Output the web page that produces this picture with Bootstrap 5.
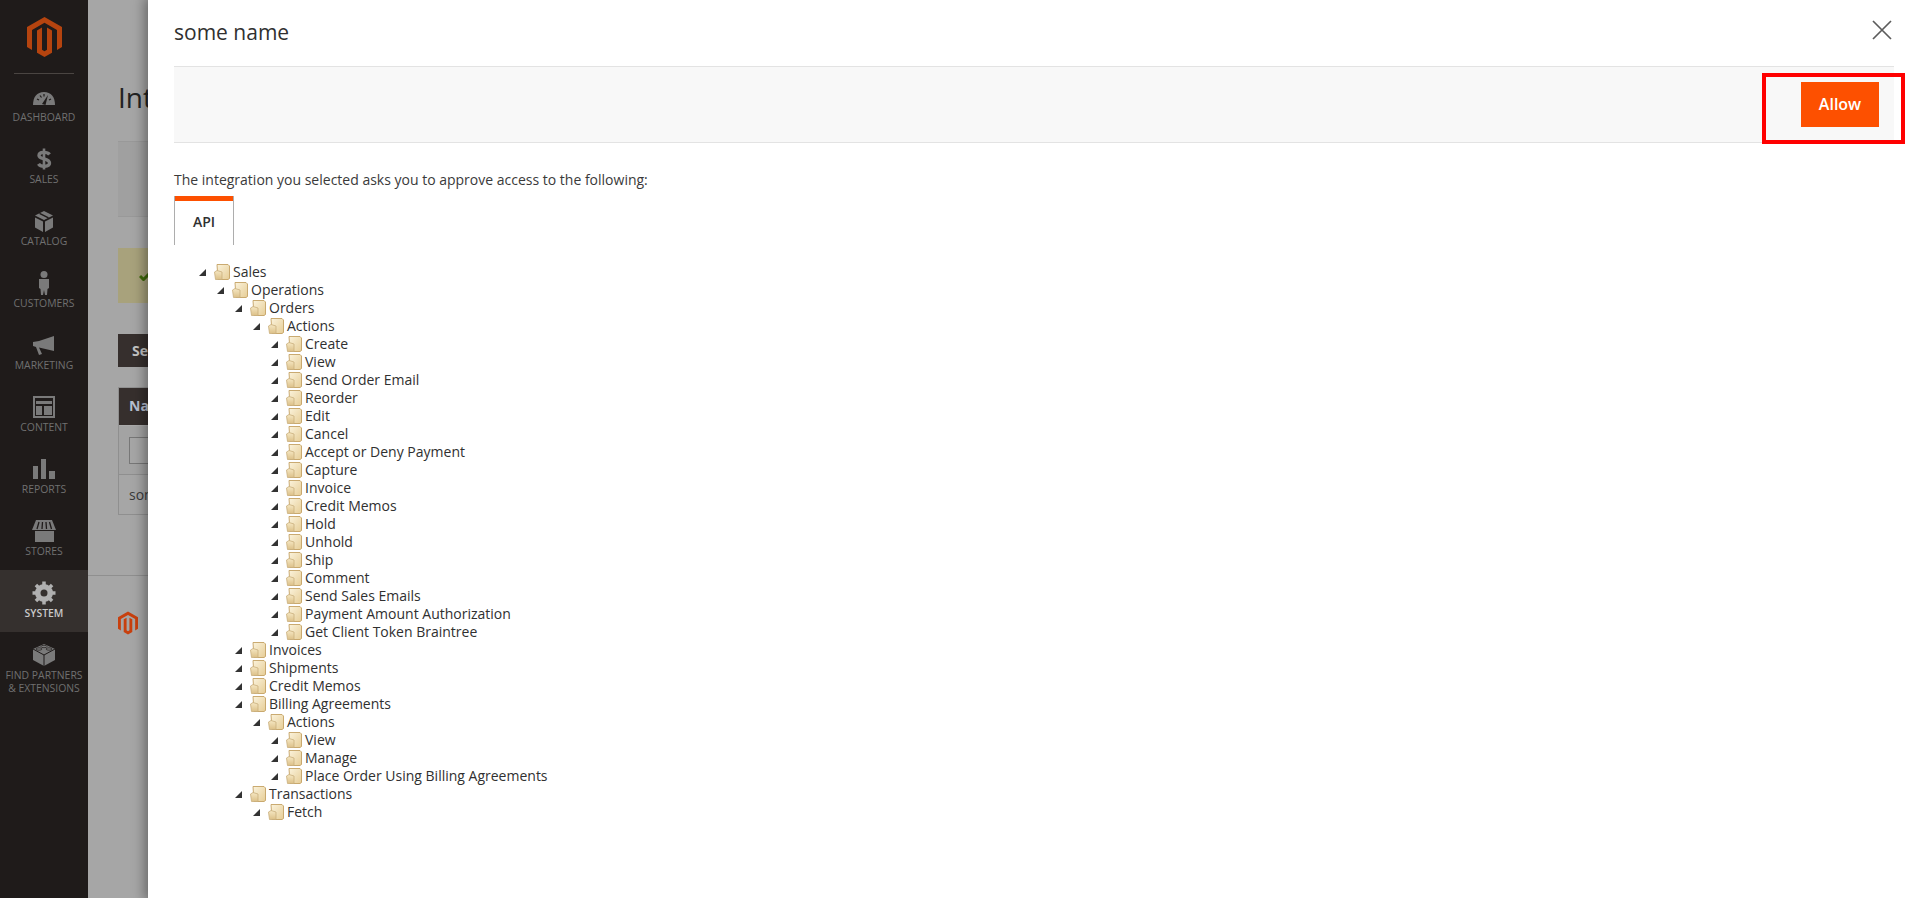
<!DOCTYPE html>
<html lang="en"><head><meta charset="utf-8"><title>Integrations</title>
<link href="https://cdn.jsdelivr.net/npm/bootstrap@5.3.0/dist/css/bootstrap.min.css" rel="stylesheet">
<style>
html,body{height:100%;overflow:hidden}
body{font-family:"Open Sans",sans-serif;font-size:14px;color:#303030;background:#a6a6a6}
.shell{height:898px;position:relative}
.sidenav{width:88px;background:#1f1b1a;flex:none}
.logobox{height:74px}
.logobox svg{width:35px;height:40px}
.rule{height:1px;background:#4a4542;margin:0 14px;margin-top:-1px}
.sitem{height:62px;color:#707070;font-size:10.4px;line-height:13px;padding-top:11px;text-align:center;white-space:nowrap}
.sitem svg{display:block;height:24px;margin:0 auto 2px;width:26px}
.sitem.on{background:#35302e;color:#c8c8c8;font-weight:600}
.backdrop{background:#a6a6a6}
.bgin{padding:0 0 0 30px;width:900px}
.bgtitle{font-size:28px;line-height:38px;padding-top:78px;color:#222;height:141px}
.bgbar{height:76px;background:#a0a0a0;border-top:1px solid #999;border-bottom:1px solid #999;margin-bottom:31px}
.bgmsg{height:55px;background:#a8a27c;margin-bottom:31px;padding:23px 0 0 21px}
.bgbtn{width:150px;height:33px;background:#362f2d;color:#c4c4c4;font-weight:700;font-size:14px;line-height:33px;padding-left:14px;margin-bottom:20px}
.bgtab{width:600px;border:1px solid #8f8f8f;height:128px;margin-bottom:60px}
.bghead{height:38px;background:#362f2d;color:#b8bfd0;font-weight:700;line-height:36px;padding-left:10px;border-bottom:1px solid #aaa}
.bgfilter{height:49px;padding:11px 10px;border-bottom:1px solid #8f8f8f;background:#a3a3a3}
.bginput{width:200px;height:27px;border:1px solid #777;background:#a6a6a6}
.bgrow{padding:10px;line-height:19px;color:#3a3a3a}
.bgfoot{border-top:1px solid #8f8f8f;padding:35px 0 0 30px}
.bgfoot svg{display:block;width:20px;height:24px}
.slidepanel{position:absolute;top:0;bottom:0;left:148px;right:0;background:#fff;box-shadow:0 0 12px 3px rgba(0,0,0,.4);padding:0 21px 0 26px}
.ptitle{font-size:21px;line-height:27px;padding-top:19px;height:66px;color:#303030}
.closex{position:absolute;top:20px;right:23px;width:20px;height:20px;background:none;border:0;padding:0}
.closex svg{display:block;width:20px;height:20px}
.actbar{height:77px;background:#f8f8f8;border-top:1px solid #e3e3e3;border-bottom:1px solid #e3e3e3;padding:15px 15px 0 0}
.allowbtn{width:78px;height:45px;background:#fd5000;border:0;border-radius:0;color:#fff;font-weight:600;font-size:16px;padding:0;line-height:43px}
.allowbtn:hover{background:#fd5000;color:#fff}
.redbox{position:absolute;left:1614px;top:73px;width:143px;height:71px;border:4px solid #f00;pointer-events:none}
.intro{margin:0;padding-top:27px;line-height:20px;height:53px;color:#3a3a3a}
.apitab{width:60px;height:49px;border:1px solid #adadad;border-bottom:0;border-top:0;position:relative;background:#fff;font-weight:600;font-size:14px;line-height:45px;text-align:center;box-shadow:inset 0 5px 0 #fd5000;padding-top:3px;color:#303030}
.ptree{list-style:none;margin:0;padding:18px 0 0 25px;color:#303030;font-size:14px;line-height:18px}
.ptree ul{list-style:none;margin:0;padding:0 0 0 18px}
.trow{height:18px;display:flex;align-items:center;white-space:nowrap}
.tarr{width:7px;height:7px;margin-right:8px;flex:none}
.tfold{width:16px;height:16px;margin-right:3px;flex:none}
</style></head><body>
<svg width="0" height="0" class="d-block position-absolute"><defs>
<symbol id="arr" viewBox="0 0 7 7"><path d="M7 0V7H0Z" fill="#333"/></symbol>
<linearGradient id="fg" x1="0" y1="0" x2="1" y2="1"><stop offset="0" stop-color="#fbf3dc"/><stop offset="1" stop-color="#e6cd96"/></linearGradient>
<linearGradient id="fh" x1="0" y1="0" x2="0" y2="1"><stop offset="0" stop-color="#f6e8c4"/><stop offset="1" stop-color="#dcc088"/></linearGradient>
<symbol id="fold" viewBox="0 0 16 16"><path d="M3 .500H14L15.500 2V14.500L14 15.500H4Z" fill="url(#fg)" stroke="#c4a263" stroke-width=".9"/><path d="M.500 8 3 6.500 8 8V15.500H1.500Z" fill="url(#fh)" stroke="#c9ae7c" stroke-width=".8"/></symbol>
<symbol id="mage" viewBox="0 0 35 40"><path d="M17.500 0 35 10V30L30 33V13L17.500 5.800 5 13V33L0 30V10ZM17.500 40 10 35.700V13.500L15 10.600V32.800L17.500 34.300 20 32.800V10.600L25 13.500V35.700Z" fill="currentColor"/></symbol>
</defs></svg>
<div class="shell d-flex">
<nav class="sidenav">
<div class="logobox d-flex align-items-center justify-content-center text-center" style="color:#b5440f"><svg><use href="#mage"/></svg></div>
<div class="rule"></div>
<div class="sitem"><svg viewBox="0 0 26 24"><path d="M2 20C2 12 6 7 13 7S24 12 24 20Z" fill="#7a7a7a"/><path d="M11 19 17 10 14.500 20Z" fill="#1f1b1a"/><path d="M6 14 8 15M9 10.500 10.500 12.500M13 9V11.500M20 14 18 15" stroke="#1f1b1a" stroke-width="1.200"/></svg>DASHBOARD</div>
<div class="sitem"><svg viewBox="0 0 26 24"><path d="M18.500 7.500C16.500 4.800 8 4.300 8 8.500 8 12.800 18.500 11 18.500 16 18.500 20.300 9.500 20 7.500 16.800" fill="none" stroke="#7a7a7a" stroke-width="3.400"/><path d="M13 1.500V22.500" stroke="#7a7a7a" stroke-width="2.600"/></svg>SALES</div>
<div class="sitem"><svg viewBox="0 0 26 24"><path d="M13 2 22 6.500 13 11 4 6.500Z" fill="#7a7a7a"/><path d="M4 8.500 12 12.500V23L4 18.500ZM22 8.500 14 12.500V23L22 18.500Z" fill="#7a7a7a"/><path d="M8.500 4.300 17.500 8.800" stroke="#1f1b1a" stroke-width="1.300"/></svg>CATALOG</div>
<div class="sitem"><svg viewBox="0 0 26 24"><circle cx="13" cy="3.500" r="3.500" fill="#7a7a7a"/><path d="M8 8H18V17L16.500 18 16 24H14L13 19 12 24H10L9.500 18 8 17Z" fill="#7a7a7a"/></svg>CUSTOMERS</div>
<div class="sitem"><svg viewBox="0 0 26 24"><path d="M2 9 8 8 23 3V18L8 14.500 11 21 8 22 5 14 2 13Z" fill="#7a7a7a"/></svg>MARKETING</div>
<div class="sitem"><svg viewBox="0 0 26 24"><path fill-rule="evenodd" d="M2 1H24V23H2ZM4 3V21H22V3Z" fill="#7a7a7a"/><path d="M5 6H21V9H5ZM5 11H11V20H5ZM13 11H21V20H13Z" fill="#7a7a7a"/></svg>CONTENT</div>
<div class="sitem"><svg viewBox="0 0 26 24"><path d="M2 9H7V22H2ZM10 2H15V22H10ZM18 14H24V22H18Z" fill="#7a7a7a"/></svg>REPORTS</div>
<div class="sitem"><svg viewBox="0 0 26 24"><path d="M4 12H23V23H4Z" fill="#7a7a7a"/><path d="M5 1H21L25 11H1Z" fill="#7a7a7a"/><path d="M8 3 6 10M11.500 3 11 10M15 3 15.500 10M18.500 3 20.500 10" stroke="#1f1b1a" stroke-width="1.300"/></svg>STORES</div>
<div class="sitem on"><svg viewBox="0 0 26 24"><circle cx="13" cy="12" r="6.500" fill="none" stroke="#b0b0b0" stroke-width="5"/><path d="M13 .500V23.500M1.500 12H24.500M4.900 3.900 21.100 20.100M21.100 3.900 4.900 20.100" stroke="#b0b0b0" stroke-width="3.500"/><circle cx="13" cy="12" r="3.500" fill="#35302e"/></svg>SYSTEM</div>
<div class="sitem"><svg viewBox="0 0 26 24"><path d="M13 1 24 6V17L13 23 2 17V6Z" fill="#7a7a7a"/><path d="M2 6 13 12 24 6M13 12V23" stroke="#1f1b1a" fill="none"/><ellipse cx="8" cy="6" rx="3" ry="1.200" fill="none" stroke="#1f1b1a" stroke-width=".7"/><ellipse cx="18" cy="6" rx="3" ry="1.200" fill="none" stroke="#1f1b1a" stroke-width=".7"/><ellipse cx="13" cy="3.500" rx="3" ry="1.200" fill="none" stroke="#1f1b1a" stroke-width=".7"/></svg>FIND PARTNERS<br>&amp; EXTENSIONS</div>
</nav>
<main class="backdrop flex-grow-1 overflow-hidden">
<div class="bgin">
<div class="bgtitle">Integrations</div>
<div class="bgbar"></div>
<div class="bgmsg"><svg width="14" height="10" viewBox="0 0 14 10" class="d-block"><path d="M1 5 4.500 8.500 12 1" fill="none" stroke="#3f6a0a" stroke-width="3"/></svg></div>
<div class="bgbtn">Search</div>
<div class="bgtab"><div class="bghead">Name</div><div class="bgfilter"><div class="bginput"></div></div><div class="bgrow">some name</div></div>
</div>
<div class="bgfoot" style="color:#c8400e"><svg><use href="#mage"/></svg></div>
</main>
<section class="slidepanel">
<div class="ptitle">some name</div>
<button class="closex" type="button" aria-label="Close"><svg viewBox="0 0 20 20"><path d="M1 1 19 19M19 1 1 19" stroke="#5c5c5c" stroke-width="1.700" fill="none"/></svg></button>
<div class="actbar d-flex justify-content-end"><button class="btn allowbtn" type="button">Allow</button></div>
<div class="redbox"></div>
<p class="intro">The integration you selected asks you to approve access to the following:</p>
<div class="apitab">API</div>
<ul class="ptree">
<li><div class="trow"><svg class="tarr"><use href="#arr"/></svg><svg class="tfold"><use href="#fold"/></svg>Sales</div>
<ul><li><div class="trow"><svg class="tarr"><use href="#arr"/></svg><svg class="tfold"><use href="#fold"/></svg>Operations</div>
<ul>
<li><div class="trow"><svg class="tarr"><use href="#arr"/></svg><svg class="tfold"><use href="#fold"/></svg>Orders</div>
<ul><li><div class="trow"><svg class="tarr"><use href="#arr"/></svg><svg class="tfold"><use href="#fold"/></svg>Actions</div>
<ul>
<li><div class="trow"><svg class="tarr"><use href="#arr"/></svg><svg class="tfold"><use href="#fold"/></svg>Create</div></li>
<li><div class="trow"><svg class="tarr"><use href="#arr"/></svg><svg class="tfold"><use href="#fold"/></svg>View</div></li>
<li><div class="trow"><svg class="tarr"><use href="#arr"/></svg><svg class="tfold"><use href="#fold"/></svg>Send Order Email</div></li>
<li><div class="trow"><svg class="tarr"><use href="#arr"/></svg><svg class="tfold"><use href="#fold"/></svg>Reorder</div></li>
<li><div class="trow"><svg class="tarr"><use href="#arr"/></svg><svg class="tfold"><use href="#fold"/></svg>Edit</div></li>
<li><div class="trow"><svg class="tarr"><use href="#arr"/></svg><svg class="tfold"><use href="#fold"/></svg>Cancel</div></li>
<li><div class="trow"><svg class="tarr"><use href="#arr"/></svg><svg class="tfold"><use href="#fold"/></svg>Accept or Deny Payment</div></li>
<li><div class="trow"><svg class="tarr"><use href="#arr"/></svg><svg class="tfold"><use href="#fold"/></svg>Capture</div></li>
<li><div class="trow"><svg class="tarr"><use href="#arr"/></svg><svg class="tfold"><use href="#fold"/></svg>Invoice</div></li>
<li><div class="trow"><svg class="tarr"><use href="#arr"/></svg><svg class="tfold"><use href="#fold"/></svg>Credit Memos</div></li>
<li><div class="trow"><svg class="tarr"><use href="#arr"/></svg><svg class="tfold"><use href="#fold"/></svg>Hold</div></li>
<li><div class="trow"><svg class="tarr"><use href="#arr"/></svg><svg class="tfold"><use href="#fold"/></svg>Unhold</div></li>
<li><div class="trow"><svg class="tarr"><use href="#arr"/></svg><svg class="tfold"><use href="#fold"/></svg>Ship</div></li>
<li><div class="trow"><svg class="tarr"><use href="#arr"/></svg><svg class="tfold"><use href="#fold"/></svg>Comment</div></li>
<li><div class="trow"><svg class="tarr"><use href="#arr"/></svg><svg class="tfold"><use href="#fold"/></svg>Send Sales Emails</div></li>
<li><div class="trow"><svg class="tarr"><use href="#arr"/></svg><svg class="tfold"><use href="#fold"/></svg>Payment Amount Authorization</div></li>
<li><div class="trow"><svg class="tarr"><use href="#arr"/></svg><svg class="tfold"><use href="#fold"/></svg>Get Client Token Braintree</div></li>
</ul></li></ul></li>
<li><div class="trow"><svg class="tarr"><use href="#arr"/></svg><svg class="tfold"><use href="#fold"/></svg>Invoices</div></li>
<li><div class="trow"><svg class="tarr"><use href="#arr"/></svg><svg class="tfold"><use href="#fold"/></svg>Shipments</div></li>
<li><div class="trow"><svg class="tarr"><use href="#arr"/></svg><svg class="tfold"><use href="#fold"/></svg>Credit Memos</div></li>
<li><div class="trow"><svg class="tarr"><use href="#arr"/></svg><svg class="tfold"><use href="#fold"/></svg>Billing Agreements</div>
<ul><li><div class="trow"><svg class="tarr"><use href="#arr"/></svg><svg class="tfold"><use href="#fold"/></svg>Actions</div>
<ul>
<li><div class="trow"><svg class="tarr"><use href="#arr"/></svg><svg class="tfold"><use href="#fold"/></svg>View</div></li>
<li><div class="trow"><svg class="tarr"><use href="#arr"/></svg><svg class="tfold"><use href="#fold"/></svg>Manage</div></li>
<li><div class="trow"><svg class="tarr"><use href="#arr"/></svg><svg class="tfold"><use href="#fold"/></svg>Place Order Using Billing Agreements</div></li>
</ul></li></ul></li>
<li><div class="trow"><svg class="tarr"><use href="#arr"/></svg><svg class="tfold"><use href="#fold"/></svg>Transactions</div>
<ul><li><div class="trow"><svg class="tarr"><use href="#arr"/></svg><svg class="tfold"><use href="#fold"/></svg>Fetch</div></li></ul></li>
</ul></li></ul></li>
</ul>
</section>
</div>
<script src="https://cdn.jsdelivr.net/npm/bootstrap@5.3.0/dist/js/bootstrap.bundle.min.js"></script>
</body></html>
